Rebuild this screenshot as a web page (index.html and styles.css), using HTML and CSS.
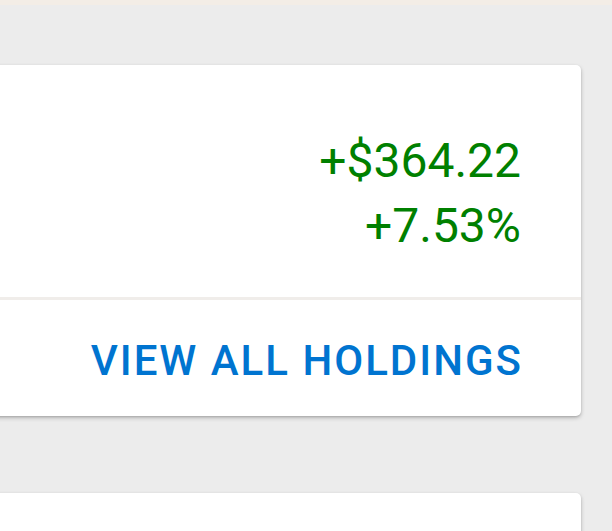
FILE: index.html
```html
<!DOCTYPE html>
<html lang="en">
<head>
    <meta charset="UTF-8">
    <meta name="viewport" content="width=device-width, initial-scale=1.0">
    <title>Portfolio</title>
    <link rel="stylesheet" href="styles.css">
</head>
<body>

    <!-- Top banner strip -->
    <div class="top-strip"></div>

    <div class="page">
        <!-- Holdings summary card -->
        <div class="card">
            <div class="card-body">
                <div class="change-amount">+$364.22</div>
                <div class="change-percent">+7.53%</div>
            </div>
            <div class="card-actions">
                <button class="text-button">View all holdings</button>
            </div>
        </div>

        <!-- Next card -->
        <div class="card card-next"></div>
    </div>

</body>
</html>
```

FILE: styles.css
```css
body {
    margin: 0;
    background: #ececec;
    font-family: 'Roboto', 'Noto Sans', sans-serif;
}

.top-strip {
    height: 5px;
    background: #f3ede6;
}

.page {
    padding: 60px 31px 0 0;
    overflow: hidden;
}

.card {
    background: #fff;
    margin-left: -20px;
    border-radius: 5px;
    box-shadow: 0px 2px 4px rgba(0, 0, 0, 0.22), 0px 1px 2px rgba(0, 0, 0, 0.12);
}

.card-body {
    padding: 63px 60px 39px 0;
    text-align: right;
    color: #008000;
    font-size: 48px;
    line-height: 65px;
}

.card-actions {
    border-top: 3px solid #f0edea;
    text-align: right;
    padding: 5px 58px 0 0;
}

.text-button {
    background: none;
    border: none;
    padding: 0;
    margin: 0;
    font-family: 'Roboto', sans-serif;
    font-weight: 500;
    font-size: 42px;
    line-height: 111px;
    letter-spacing: 2px;
    text-transform: uppercase;
    color: #0074d0;
    cursor: pointer;
}

.card-next {
    margin-top: 77px;
    height: 120px;
}
```
